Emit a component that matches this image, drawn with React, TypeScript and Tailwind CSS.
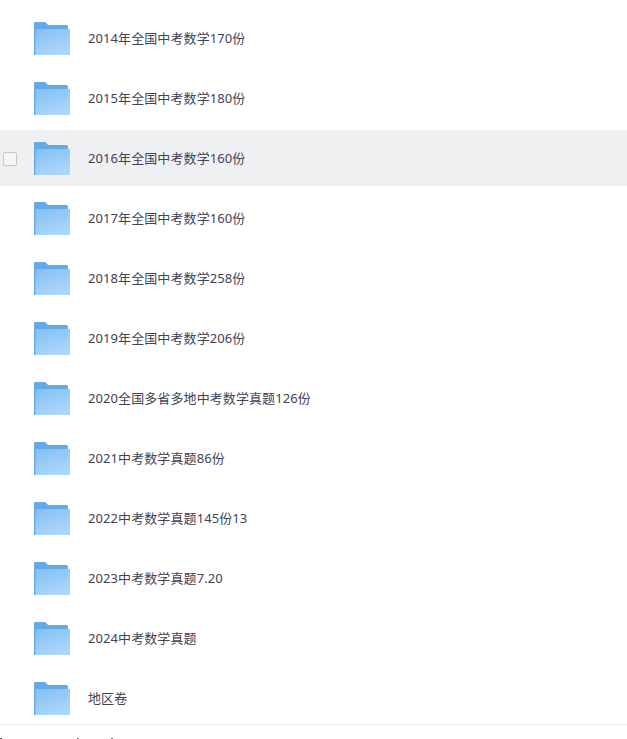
const names = [
  "2014年全国中考数学170份",
  "2015年全国中考数学180份",
  "2016年全国中考数学160份",
  "2017年全国中考数学160份",
  "2018年全国中考数学258份",
  "2019年全国中考数学206份",
  "2020全国多省多地中考数学真题126份",
  "2021中考数学真题86份",
  "2022中考数学真题145份13",
  "2023中考数学真题7.20",
  "2024中考数学真题",
  "地区卷",
];

function Folder() {
  return (
    <svg width="37" height="33" viewBox="0 0 37 33" className="mt-px block shrink-0">
      <defs>
        <linearGradient id="front" x1="0" y1="0" x2="0.5" y2="1">
          <stop offset="0" stopColor="#83bff3" />
          <stop offset="1" stopColor="#acd6fb" />
        </linearGradient>
      </defs>
      <path d="M0 1Q0 0 1 0H10.5Q11.5 0 12.2 .8L14 3H32.5Q34 3 34 4.5V33H0Z" fill="#62abe6" />
      <path d="M1.5 8Q1.5 7 2.5 7H35.2Q36 7 36 7.8V32.2Q36 33 35.2 33H1.5Z" fill="url(#front)" />
      <path d="M26 12.5H34M26 15.5H33M27 18.5H31" stroke="#78b6ee" strokeWidth=".6" opacity=".5" />
    </svg>
  );
}

export default function App() {
  return (
    <main className="flex h-[739px] w-full flex-col overflow-hidden bg-white font-['Noto_Sans','Noto_Sans_CJK_SC',sans-serif] text-[13px] tracking-[0.09px] text-[#424255]">
      <ul className="flex h-[724px] shrink-0 flex-col gap-1 overflow-hidden pt-[10px]">
        {names.map((name, i) => (
          <li key={name} className={`flex h-14 shrink-0 items-center ${i === 2 ? "bg-[#eff0f2]" : ""}`}>
            <div className="flex w-[34px] shrink-0 pl-[3px] pt-0.5">
              {i === 2 && <span className="size-[14px] rounded-[2px] border border-[#c3c5c9] bg-[#f4f5f6]" />}
            </div>
            <Folder />
            <span className="ml-[17px] whitespace-nowrap leading-5">{name}</span>
          </li>
        ))}
      </ul>
      <footer className="flex h-[15px] shrink-0 items-end border-t border-[#ececef]">
        <span className="h-px w-0.5 bg-[#55555f]" />
        <span className="ml-[75px] h-px w-0.5 bg-[#777781]" />
        <span className="ml-[32px] h-px w-0.5 bg-[#777781]" />
      </footer>
    </main>
  );
}
